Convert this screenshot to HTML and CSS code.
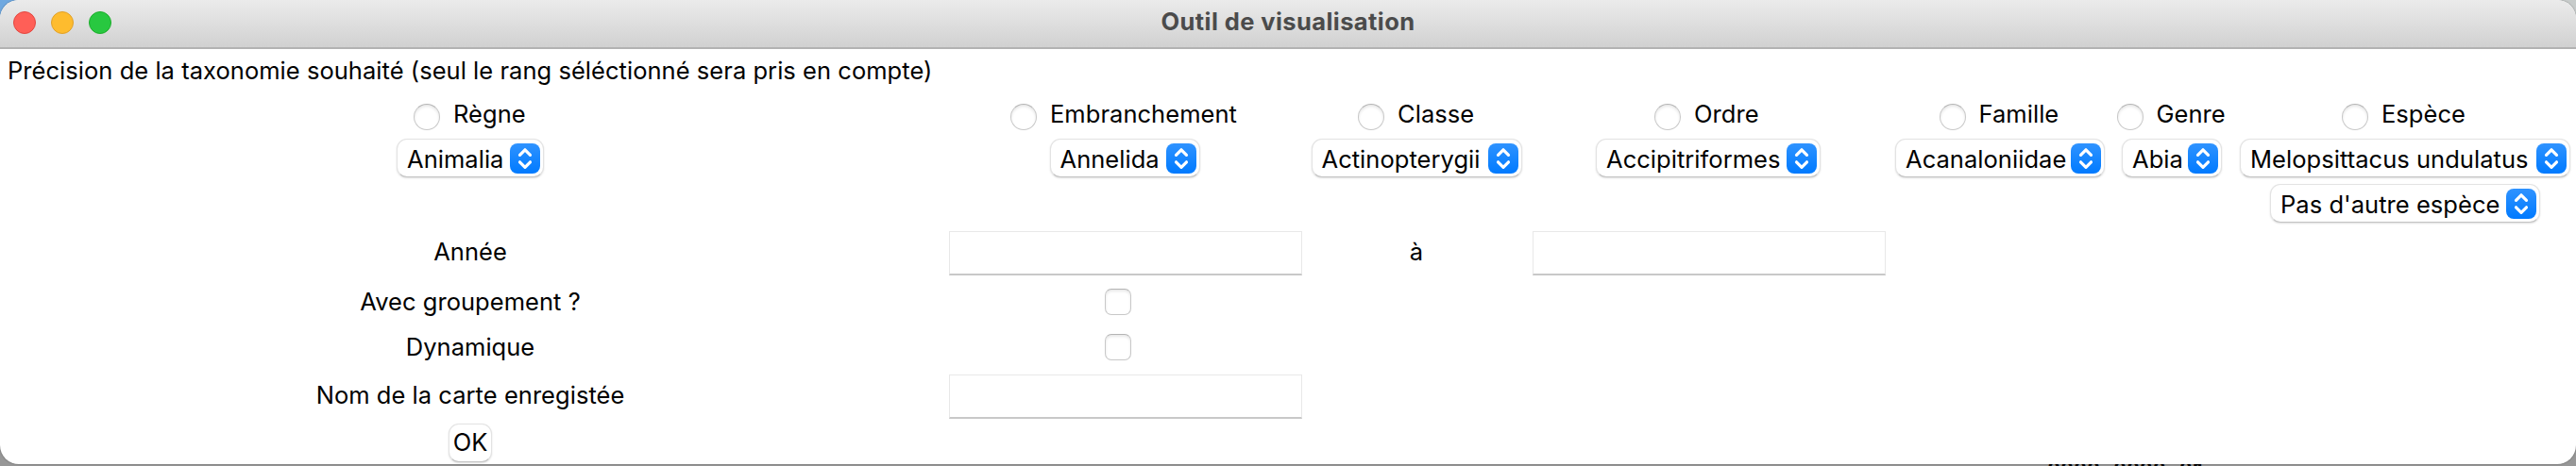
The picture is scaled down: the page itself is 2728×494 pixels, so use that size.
FILE: index.html
```html
<!DOCTYPE html>
<html lang="fr">
<head>
<meta charset="utf-8">
<title>Outil de visualisation</title>
<link rel="stylesheet" href="styles.css">
</head>
<body>
<svg class="defs" width="0" height="0"><symbol id="chev" viewBox="0 0 32 32"><path d="M10.500 12.400 16 6.800l5.500 5.600M10.500 19.800 16 25.400l5.500-5.600" fill="none" stroke="#fff" stroke-width="3.200" stroke-linecap="round" stroke-linejoin="round"/></symbol></svg>
<div class="backdrop"><span class="behind">0000-0000-01</span></div>
<div class="window">
  <header class="titlebar">
    <div class="lights"><i class="light red"></i><i class="light yellow"></i><i class="light green"></i></div>
    <h1 class="title"><span class="t">Outil de visualisation</span></h1>
  </header>
  <main class="form">
    <p class="intro"><span class="t">Précision de la taxonomie souhaité (seul le rang séléctionné sera pris en compte)</span></p>
    <div class="grid ranks">
      <label class="radio"><i class="dot"></i><span class="t" style="width:78px">Règne</span></label>
      <label class="radio"><i class="dot"></i><span class="t" style="width:200px">Embranchement</span></label>
      <label class="radio"><i class="dot"></i><span class="t" style="width:82px">Classe</span></label>
      <label class="radio"><i class="dot"></i><span class="t" style="width:72px">Ordre</span></label>
      <label class="radio"><i class="dot"></i><span class="t" style="width:87px">Famille</span></label>
      <label class="radio"><i class="dot"></i><span class="t" style="width:75px">Genre</span></label>
      <label class="radio"><i class="dot"></i><span class="t" style="width:92px">Espèce</span></label>
    </div>
    <div class="grid values">
      <button class="select" style="width:156px"><span class="t">Animalia</span><svg class="arrow"><use href="#chev"/></svg></button>
      <button class="select" style="width:159px"><span class="t">Annelida</span><svg class="arrow"><use href="#chev"/></svg></button>
      <button class="select" style="width:223px"><span class="t">Actinopterygii</span><svg class="arrow"><use href="#chev"/></svg></button>
      <button class="select" style="width:238px"><span class="t">Accipitriformes</span><svg class="arrow"><use href="#chev"/></svg></button>
      <button class="select" style="width:222px"><span class="t">Acanaloniidae</span><svg class="arrow"><use href="#chev"/></svg></button>
      <button class="select" style="width:106px"><span class="t">Abia</span><svg class="arrow"><use href="#chev"/></svg></button>
      <button class="select" style="width:350px"><span class="t">Melopsittacus undulatus</span><svg class="arrow"><use href="#chev"/></svg></button>
    </div>
    <div class="grid values">
      <button class="select last" style="width:286px"><span class="t">Pas d'autre espèce</span><svg class="arrow"><use href="#chev"/></svg></button>
    </div>
    <div class="grid entry-row">
      <span class="t">Année</span><input class="entry"><span class="t">à</span><input class="entry">
    </div>
    <div class="grid check-row"><span class="t">Avec groupement ?</span><i class="check"></i></div>
    <div class="grid check-row"><span class="t">Dynamique</span><i class="check"></i></div>
    <div class="grid entry-row name-row"><span class="t">Nom de la carte enregistée</span><input class="entry"></div>
    <div class="grid ok-row"><button class="ok"><span class="t">OK</span></button></div>
  </main>
</div>
</body>
</html>
```
FILE: styles.css
```css
* { box-sizing: border-box; }
body {
  margin: 0;
  width: 2728px;
  height: 494px;
  overflow: hidden;
  position: relative;
  background: #8f8f8f;
  color: #000;
  font: 25.5px/32px Inter, "Liberation Sans", sans-serif;
  letter-spacing: 0.04px;
}
.defs { position: absolute; }
.t { white-space: nowrap; display: block; }
.backdrop {
  position: absolute;
  inset: 0;
  overflow: hidden;
  background: linear-gradient(90deg, #6fa8e0 0 20px, #c8cccb 20px) top / 100% 50px no-repeat, #979797;
}
.behind { position: absolute; left: 2168px; top: 486px; font: bold 23.3px/26px "Liberation Mono", monospace; letter-spacing: 0; }
.window { position: relative; height: 492px; border-radius: 20px; overflow: hidden; background: #fff; box-shadow: 0 0 2px #0006; }
.titlebar {
  height: 52px;
  display: grid;
  grid-template-columns: 1fr auto 1fr;
  align-items: center;
  padding: 0 14px 4px;
  background: linear-gradient(#ebebeb, #d1d1d1 50px);
  border-bottom: 2px solid #b2b2b2;
}
.lights { display: flex; gap: 16px; padding-top: 2px; }
.light { width: 24px; height: 24px; border-radius: 50%; border: 1px solid; }
.red { background: #ff5f57; border-color: #e2463f; }
.yellow { background: #febc2e; border-color: #e0a028; }
.green { background: #28c840; border-color: #1dad2b; }
.title { margin: 0; font-size: 25.5px; font-weight: 700; letter-spacing: 0.42px; color: #4b4b4b; }
.intro { margin: 7px 0 0 8px; height: 47px; }
.grid { display: grid; grid-template-columns: 996px 390px 228px 390px 228px 136px 358px; justify-items: center; }
.ranks { height: 41px; }
.radio { display: flex; gap: 14px; align-items: flex-start; }
.radio .t { margin-top: -1px; }
.dot, .check {
  display: block;
  width: 28px;
  height: 28px;
  border: 1px solid #c8c8c8;
  border-top-color: #b4b4b4;
  background: #fff;
  box-shadow: inset 0 2px 3px #00000018;
}
.dot { border-radius: 50%; margin-top: 4px; }
.check { border-radius: 7px; margin: 2px 14px 0 0; }
.values { height: 48px; }
.select, .ok {
  height: 41px;
  border: 1px solid #e3e3e3;
  border-bottom-color: #c4c4c4;
  border-radius: 11px;
  background: #fff;
  box-shadow: 0 1px 2px #0002;
  font: inherit;
  letter-spacing: inherit;
  color: inherit;
}
.select { display: flex; justify-content: space-between; padding: 4px 3px 0 10px; }
.select .t { padding-top: 1px; }
.last { grid-column: 7; }
.arrow { width: 32px; height: 32px; border-radius: 8px; background: linear-gradient(#2f93ff, #007aff); flex: none; }
.entry-row { height: 61px; padding-top: 2px; }
.entry-row .t { padding-top: 6px; }
.entry { width: 374px; height: 47px; margin: 0 0 0 2px; border: 1px solid #e8e8e8; border-bottom: 2px solid #c8c8c8; background: #fff; }
.check-row { height: 48px; }
.entry-row.name-row { height: 54px; margin-top: -5px; }
.ok { width: 46px; padding: 0 0 2px; }
```
